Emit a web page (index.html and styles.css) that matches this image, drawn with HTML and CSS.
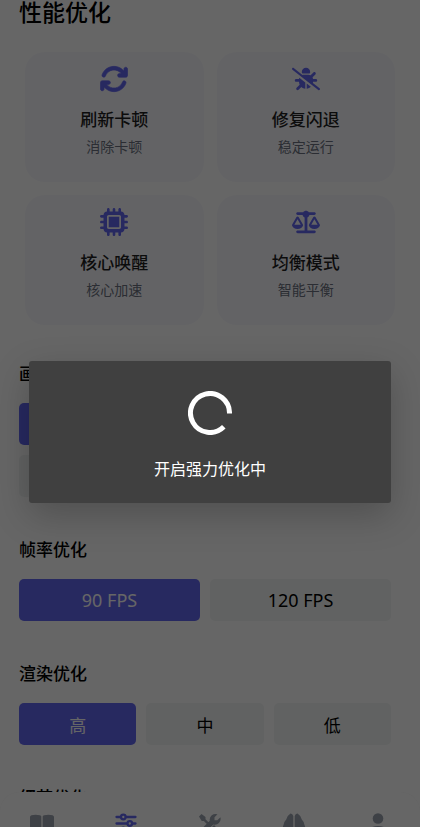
FILE: index.html
```html
<!DOCTYPE html>
<html lang="zh-CN">
<head>
<meta charset="utf-8">
<meta name="viewport" content="width=device-width, initial-scale=1">
<title>性能优化</title>
<link rel="stylesheet" href="styles.css">
</head>
<body>
<div class="app">
  <main class="page">
    <h1 class="page-title">性能优化</h1>
    <div class="cards">
      <button class="card" type="button">
        <svg class="card-icon" viewBox="8 8 496 496" aria-hidden="true"><path stroke="#6366f1" stroke-width="12" d="M105.1 202.6c7.7-21.8 20.2-42.3 37.8-59.8c62.5-62.5 163.8-62.5 226.3 0L386.3 160 352 160c-17.7 0-32 14.3-32 32s14.3 32 32 32l111.5 0 .4 0c17.7 0 32-14.3 32-32l0-112c0-17.7-14.3-32-32-32s-32 14.3-32 32l0 35.2L414.4 97.6c-87.5-87.5-229.3-87.5-316.8 0C73.2 122 55.6 150.7 44.8 181.4c-5.9 16.7 2.9 34.9 19.5 40.8s34.9-2.9 40.8-19.5zM39 289.3c-5 1.5-9.8 4.2-13.7 8.2c-4 4-6.7 8.8-8.1 14c-.3 1.2-.6 2.5-.8 3.8c-.3 1.7-.4 3.4-.4 5.1L16 432c0 17.7 14.3 32 32 32s32-14.3 32-32l0-35.1 17.6 17.5c87.5 87.4 229.3 87.4 316.7 0c24.4-24.4 42.1-53.1 52.9-83.8c5.9-16.7-2.9-34.9-19.5-40.8s-34.9 2.9-40.8 19.5c-7.7 21.8-20.2 42.3-37.8 59.8c-62.5 62.5-163.8 62.5-226.3 0l-.1-.1L125.6 352l34.4 0c17.7 0 32-14.3 32-32s-14.3-32-32-32L48.4 288c-1.6 0-3.2 .1-4.8 .3s-3.1 .5-4.6 1z"/></svg>
        <span class="card-title">刷新卡顿</span>
        <span class="card-sub">消除卡顿</span>
      </button>
      <button class="card" type="button">
        <svg class="card-icon" viewBox="0 0 640 512" aria-hidden="true"><path d="M38.8 5.1C28.4-3.1 13.3-1.2 5.1 9.2S-1.2 34.7 9.2 42.9l592 464c10.4 8.2 25.5 6.3 33.7-4.1s6.3-25.5-4.1-33.7L477.4 348.9c1.7-9.4 2.6-19 2.6-28.9h64c17.7 0 32-14.3 32-32s-14.3-32-32-32H479.7c-1.1-14.1-5-27.5-11.1-39.5c.7-.6 1.4-1.2 2.1-1.9l64-64c12.5-12.5 12.5-32.8 0-45.3s-32.8-12.5-45.3 0l-64 64c-.7 .7-1.3 1.4-1.9 2.1C409.2 164.1 393.1 160 376 160H264c-8.3 0-16.3 1-24 2.8L38.8 5.1zM320 0c-53 0-96 43-96 96v3.6c0 15.7 12.7 28.4 28.4 28.4H387.6c15.7 0 28.4-12.7 28.4-28.4V96c0-53-43-96-96-96zM160.3 256H96c-17.7 0-32 14.3-32 32s14.3 32 32 32h64c0 24.6 5.5 47.8 15.4 68.6c-2.2 1.3-4.2 2.9-6 4.8l-64 64c-12.5 12.5-12.5 32.8 0 45.3s32.8 12.5 45.3 0l63.1-63.1c24.5 21.8 55.8 36.2 90.3 39.6V335.5L166.7 227.3c-3.4 9-5.6 18.7-6.4 28.7zM336 479.2c36.6-3.6 69.7-19.6 94.8-43.8L336 360.7V479.2z"/></svg>
        <span class="card-title">修复闪退</span>
        <span class="card-sub">稳定运行</span>
      </button>
      <button class="card" type="button">
        <svg class="card-icon" viewBox="0 0 512 512" aria-hidden="true"><path d="M176 24c0-13.3-10.7-24-24-24s-24 10.7-24 24l0 40c-35.3 0-64 28.7-64 64l-40 0c-13.3 0-24 10.7-24 24s10.7 24 24 24l40 0 0 56-40 0c-13.3 0-24 10.7-24 24s10.7 24 24 24l40 0 0 56-40 0c-13.3 0-24 10.7-24 24s10.7 24 24 24l40 0c0 35.3 28.7 64 64 64l0 40c0 13.3 10.7 24 24 24s24-10.7 24-24l0-40 56 0 0 40c0 13.3 10.7 24 24 24s24-10.7 24-24l0-40 56 0 0 40c0 13.3 10.7 24 24 24s24-10.7 24-24l0-40c35.3 0 64-28.7 64-64l40 0c13.3 0 24-10.7 24-24s-10.7-24-24-24l-40 0 0-56 40 0c13.3 0 24-10.7 24-24s-10.7-24-24-24l-40 0 0-56 40 0c13.3 0 24-10.7 24-24s-10.7-24-24-24l-40 0c0-35.3-28.7-64-64-64l0-40c0-13.3-10.7-24-24-24s-24 10.7-24 24l0 40-56 0 0-40c0-13.3-10.7-24-24-24s-24 10.7-24 24l0 40-56 0 0-40zM160 128l192 0c17.7 0 32 14.3 32 32l0 192c0 17.7-14.3 32-32 32l-192 0c-17.7 0-32-14.3-32-32l0-192c0-17.7 14.3-32 32-32zm192 32l-192 0 0 192 192 0 0-192z"/></svg>
        <span class="card-title">核心唤醒</span>
        <span class="card-sub">核心加速</span>
      </button>
      <button class="card" type="button">
        <svg class="card-icon" viewBox="0 0 640 512" aria-hidden="true"><path d="M384 32l128 0c17.7 0 32 14.3 32 32s-14.3 32-32 32L398.4 96c-5.2 25.8-22.9 47.1-46.4 57.3L352 448l160 0c17.7 0 32 14.3 32 32s-14.3 32-32 32l-192 0-192 0c-17.7 0-32-14.3-32-32s14.3-32 32-32l160 0 0-294.7c-23.5-10.3-41.2-31.6-46.4-57.3L128 96c-17.7 0-32-14.3-32-32s14.3-32 32-32l128 0c14.6-19.4 37.8-32 64-32s49.4 12.6 64 32zm55.6 288l144.9 0L512 195.8 439.6 320zM512 416c-62.9 0-115.2-34-126-78.9c-2.6-11 1-22.3 6.7-32.1l95.2-163.2c5-8.6 14.2-13.8 24.1-13.8s19.1 5.3 24.1 13.8l95.2 163.2c5.7 9.8 9.3 21.1 6.7 32.1C627.2 382 574.9 416 512 416zM126.8 195.8L54.4 320l144.9 0L126.8 195.8zM.9 337.1c-2.6-11 1-22.3 6.7-32.1l95.2-163.2c5-8.6 14.2-13.8 24.1-13.8s19.1 5.3 24.1 13.8l95.2 163.2c5.7 9.8 9.3 21.1 6.7 32.1C242 382 189.7 416 126.8 416S11.7 382 .9 337.1z"/></svg>
        <span class="card-title">均衡模式</span>
        <span class="card-sub">智能平衡</span>
      </button>
    </div>

    <section class="group">
      <h2 class="group-title">画质优化</h2>
      <div class="options two">
        <button class="option active" type="button" aria-label="流畅"></button>
        <button class="option" type="button" aria-label="均衡"></button>
        <button class="option" type="button" aria-label="高清"></button>
        <button class="option" type="button" aria-label="超清"></button>
      </div>
    </section>
    <section class="group">
      <h2 class="group-title">帧率优化</h2>
      <div class="options two">
        <button class="option active" type="button">90 FPS</button>
        <button class="option" type="button">120 FPS</button>
      </div>
    </section>
    <section class="group">
      <h2 class="group-title">渲染优化</h2>
      <div class="options three">
        <button class="option active" type="button">高</button>
        <button class="option" type="button">中</button>
        <button class="option" type="button">低</button>
      </div>
    </section>
    <section class="group">
      <h2 class="group-title">细节优化</h2>
    </section>
  </main>

  <nav class="tabs">
    <a class="tab" href="#guide" aria-label="指南"><svg class="tab-icon" viewBox="0 0 24 24" aria-hidden="true"><path d="M0 3Q0 .7 5.700 .7Q11.300 .7 11.300 2.500V21H0zM12.700 2.500Q12.700 .7 18.300 .7Q24 .7 24 3V21H12.700z"/></svg></a>
    <a class="tab current" href="#tune" aria-label="优化"><svg class="tab-icon" viewBox="0 0 24 24" aria-hidden="true"><g fill="none" stroke="currentColor" stroke-width="2.300" stroke-linecap="round"><path d="M2.500 3H6.500M12 3H21.500M2.500 9.500H13M18.500 9.500H21.500M2.500 16H6.500M12 16H21.500"/><circle cx="9.300" cy="3" r="2.300"/><circle cx="15.800" cy="9.500" r="2.300"/><circle cx="9.300" cy="16" r="2.300"/></g></svg></a>
    <a class="tab" href="#tools" aria-label="工具"><svg class="tab-icon" viewBox="-1 0 24 24" aria-hidden="true"><path d="M0 2.500L2.500 0L6.500 3V5.300L10.500 9.200L8.800 11L4.900 7H2.700zM18.500 .3L15.500 3.300V6.200H18.300L21.400 3.200A5.800 5.800 0 0 1 14.300 10.400L4.500 20.300A2.600 2.600 0 0 1 .8 16.600L10.800 6.800A5.800 5.800 0 0 1 18.500 .3zM13 13L15 11L21 17.500L17.500 20.500z"/></svg></a>
    <a class="tab" href="#boost" aria-label="加速"><svg class="tab-icon" viewBox="0 0 24 24" aria-hidden="true"><path d="M11.300 2V21H2Q-.5 15 1.500 11Q2 7.500 4.200 5.500Q5 1.500 8.500 -.6Q10.500 -.8 11.300 2zM12.700 2V21H22Q24.500 15 22.500 11Q22 7.500 19.800 5.500Q19 1.500 15.500 -.6Q13.500 -.8 12.700 2z"/></svg></a>
    <a class="tab" href="#me" aria-label="我的"><svg class="tab-icon" viewBox="0 0 24 24" aria-hidden="true"><circle cx="12" cy="4.500" r="5.300"/><path d="M1.500 21Q1.500 12 12 12T22.500 21z"/></svg></a>
  </nav>

  <div class="overlay">
    <div class="dialog" role="alertdialog" aria-labelledby="status">
      <svg class="spinner" viewBox="0 0 44 44" aria-hidden="true"><path d="M41.500 22.500A19.500 19.500 0 1 0 35.800 35.800" fill="none" stroke="currentColor" stroke-width="5"/></svg>
      <p class="status" id="status">开启强力优化中</p>
    </div>
  </div>
</div>
</body>
</html>
```
FILE: styles.css
```css
* {
  box-sizing: border-box;
}

body {
  margin: 0;
  padding-right: 1px;
  background: #fff;
  color: #000;
  font-family: "Noto Sans", "Noto Sans CJK SC", sans-serif;
}

button {
  border: 0;
  padding: 0;
  color: inherit;
  font: inherit;
}

.app {
  position: relative;
  height: 100vh;
  overflow: hidden;
  background: #fff;
}

.page-title {
  margin: 0 19px;
  font-size: 23px;
  line-height: 24px;
  font-weight: 500;
}

.cards {
  display: grid;
  grid-template-columns: 1fr 1fr;
  gap: 13px;
  padding: 28px 25px 0;
}

.card {
  display: flex;
  flex-direction: column;
  align-items: center;
  padding: 13px 0 23px;
  border-radius: 20px;
  background: #f8f8fd;
}

.card-icon {
  width: 28px;
  height: 28px;
  fill: #6366f1;
}

.card-title {
  margin-top: 14px;
  font-size: 17px;
  line-height: 26px;
  font-weight: 500;
  color: #1f1f1f;
}

.card-sub {
  margin-top: 2px;
  font-size: 14px;
  line-height: 24px;
  color: #6b7280;
}

.group {
  margin: 0 29px 0 19px;
  padding-bottom: 41px;
}

.cards + .group {
  margin-top: 37px;
}

.group-title {
  margin: 0 0 17px;
  font-size: 17px;
  line-height: 24px;
  font-weight: 500;
}

.options {
  display: grid;
  gap: 10px;
}

.two {
  grid-template-columns: 1fr 1fr;
}

.three {
  grid-template-columns: 1fr 1fr 1fr;
}

.option {
  height: 42px;
  border-radius: 5px;
  background: #f3f6f5;
  font-size: 18px;
}

.three .option {
  font-size: 17px;
}

.option.active {
  background: #6366f1;
  color: #fff;
}

.tabs {
  position: absolute;
  inset: auto 0 0;
  display: flex;
  height: 35px;
  padding-top: 22px;
  border-radius: 20px 20px 0 0;
  overflow: hidden;
  background: #fff;
  box-shadow: 0 0 1px rgba(0, 0, 0, 0.06);
}

.tab {
  flex: 1;
  display: flex;
  justify-content: center;
  color: #9ca3af;
}

.tab.current {
  color: #6366f1;
}

.tab-icon {
  width: 24px;
  height: 24px;
  fill: currentColor;
  overflow: visible;
}

.overlay {
  position: absolute;
  inset: 0;
  display: flex;
  align-items: center;
  padding: 37px 29px 0;
  background: rgba(0, 0, 0, 0.6);
}

.dialog {
  flex: 1;
  display: flex;
  flex-direction: column;
  align-items: center;
  padding: 30px 0 22px;
  border-radius: 3px;
  background: #404040;
  color: #fff;
  box-shadow: 0 12px 36px rgba(0, 0, 0, 0.22);
}

.spinner {
  width: 44px;
  height: 44px;
}

.status {
  margin: 22px 0 0;
  font-size: 16px;
  line-height: 24px;
}
```
